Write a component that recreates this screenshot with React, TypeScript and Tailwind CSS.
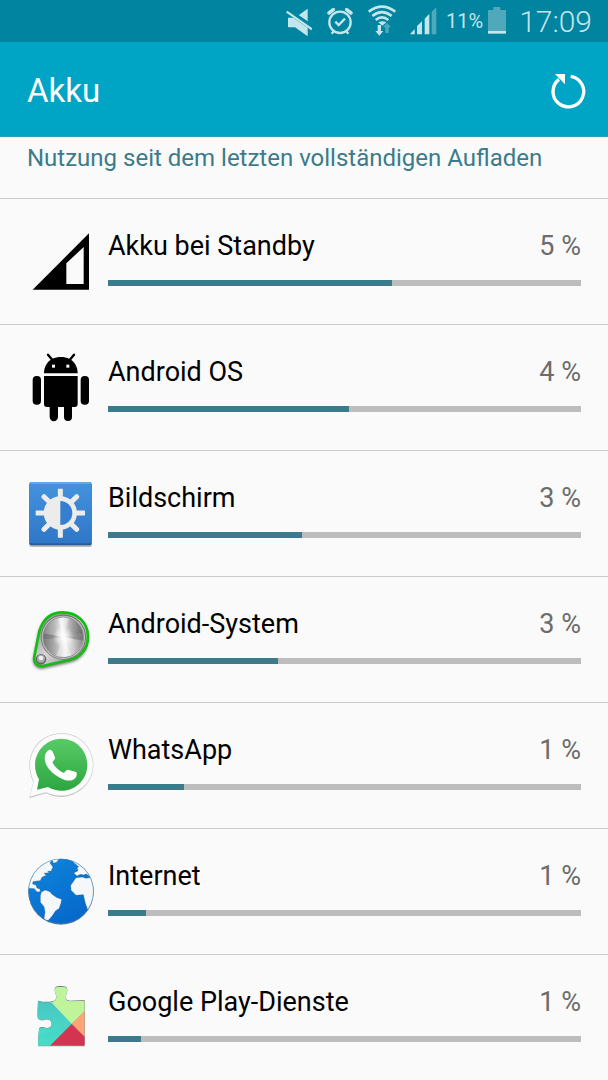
import { ReactNode } from "react";

type BatteryItem = {
	name: string;
	percent: number;
	// Bar length relative to the full track, in percent
	share: number;
	icon: ReactNode;
};

function StandbyIcon() {
	return (
		<svg viewBox="24 18 216 216" className="size-[72px] shrink-0" aria-hidden="true">
			<path d="M219 40V209H50Z" fill="#000" />
			<path d="M203 81V192H151V130Z" fill="#fafafa" />
		</svg>
	);
}

function AndroidIcon() {
	return (
		<svg viewBox="24 36 216 216" className="size-[72px] shrink-0" aria-hidden="true">
			<path d="M84 100C84 80 93 65 109 56C125 49 145 49 160 56C176 65 185 80 185 100Z" />
			<path d="M96 44L109 60M174 44L161 60" stroke="#000" strokeWidth="7" strokeLinecap="round" />
			<path d="M84 108H185V192Q185 201 176 201H168V231A12 12 0 0 1 144 231V201H126V231A12 12 0 0 1 101 231V201H93Q84 201 84 192Z" />
			<rect x="50" y="108" width="25" height="86" rx="12" />
			<rect x="194" y="108" width="25" height="86" rx="12" />
			<rect x="108" y="74" width="9" height="9" fill="#fafafa" />
			<rect x="151" y="74" width="9" height="9" fill="#fafafa" />
		</svg>
	);
}

function DisplayIcon() {
	return (
		<svg viewBox="24 24 216 216" className="size-[72px] shrink-0" aria-hidden="true">
			<defs>
				<linearGradient id="display-bg" x1="0" y1="0" x2="0" y2="1">
					<stop offset="0" stopColor="#4492dc" />
					<stop offset="1" stopColor="#2f77c8" />
				</linearGradient>
			</defs>
			<rect x="40" y="42" width="188" height="189" rx="6" fill="#b9babd" />
			<rect x="40" y="38" width="187" height="188" rx="6" fill="#275c97" />
			<rect x="40" y="36" width="187" height="184" rx="6" fill="url(#display-bg)" />
			<path d="M45 39H222" stroke="#6bb3df" strokeWidth="4" />
			<g stroke="#ececec" strokeWidth="15" strokeLinejoin="round">
				<path d="M133 56V85M133 174V203M59 129H88M178 129H207" />
				<path d="M84 80L101 97M182 80L165 97M84 178L101 161M182 178L165 161" strokeLinecap="round" />
			</g>
			<circle cx="133" cy="129" r="50" fill="#ececec" />
			<path d="M133 93A36 36 0 0 1 133 165Z" fill="#347fcf" />
		</svg>
	);
}

function SystemIcon() {
	return (
		<svg viewBox="24 24 216 216" className="size-[72px] shrink-0" aria-hidden="true">
			<defs>
				<linearGradient id="system-plate" x1="0" y1="0" x2="1" y2="1">
					<stop offset="0" stopColor="#777" />
					<stop offset="0.5" stopColor="#d8d8d8" />
					<stop offset="1" stopColor="#777" />
				</linearGradient>
				<linearGradient id="system-upper" x1="0" y1="0" x2="1" y2="0">
					<stop offset="0" stopColor="#868686" />
					<stop offset="0.3" stopColor="#bcbcbc" />
					<stop offset="0.48" stopColor="#f4f4f4" />
					<stop offset="0.7" stopColor="#aaa" />
					<stop offset="1" stopColor="#666" />
				</linearGradient>
				<linearGradient id="system-lower" x1="0" y1="0" x2="1" y2="0">
					<stop offset="0" stopColor="#777" />
					<stop offset="0.3" stopColor="#b0b0b0" />
					<stop offset="0.55" stopColor="#f2f2f2" />
					<stop offset="0.75" stopColor="#ccc" />
					<stop offset="1" stopColor="#888" />
				</linearGradient>
				<radialGradient id="system-glow">
					<stop offset="0" stopColor="#fff" />
					<stop offset="1" stopColor="#fff" stopOpacity="0" />
				</radialGradient>
				<filter id="system-shadow" x="-20%" y="-20%" width="140%" height="140%">
					<feGaussianBlur stdDeviation="5" />
				</filter>
			</defs>
			<path
				d="M70 106C82 65 106 49 140 49C184 49 216 80 216 122C216 160 190 187 158 192L80 210C63 212 52 198 55 182Z"
				fill="#444"
				stroke="#444"
				strokeWidth="4"
				opacity="0.8"
				filter="url(#system-shadow)"
				transform="translate(-1 6)"
			/>
			<path
				d="M70 106C82 65 106 49 140 49C184 49 216 80 216 122C216 160 190 187 158 192L80 210C63 212 52 198 55 182Z"
				fill="url(#system-plate)"
				stroke="#10c010"
				strokeWidth="8"
			/>
			<circle cx="142" cy="123" r="68" fill="#777" />
			<circle cx="142" cy="124" r="65" fill="#c8c8c8" />
			<path d="M82 131A60 60 0 0 1 201 115Z" fill="url(#system-upper)" />
			<path d="M82 131A60 60 0 0 0 201 115Z" fill="url(#system-lower)" />
			<path d="M82 131L142 123L82 112ZM201 115L142 123L201 134Z" fill="#555" opacity="0.4" />
			<path d="M125 66L142 123L158 66ZM120 181L142 123L166 181Z" fill="#fff" opacity="0.35" />
			<circle cx="142" cy="123" r="32" fill="url(#system-glow)" />
			<circle cx="142" cy="124" r="61" fill="none" stroke="#777" strokeWidth="2" />
			<circle cx="75" cy="190" r="16" fill="#666" />
			<circle cx="75" cy="188" r="12" fill="#aaa" />
			<circle cx="75" cy="186" r="7" fill="#eee" />
		</svg>
	);
}

function WhatsAppIcon() {
	return (
		<svg viewBox="24 24 216 216" className="size-[72px] shrink-0" aria-hidden="true">
			<defs>
				<linearGradient id="wa-bg" x1="0" y1="0" x2="0" y2="1">
					<stop offset="0" stopColor="#58cb66" />
					<stop offset="1" stopColor="#2da641" />
				</linearGradient>
			</defs>
			<path
				d="M40 228L52 180C18 110 62 34 136 34C190 34 232 76 232 130C232 199 155 247 90 214Z"
				fill="#bdbdbd"
			/>
			<path
				d="M41 224L53 178C20 110 64 35 136 35C189 35 231 76 231 129C231 196 155 243 90 211Z"
				fill="#fcfcfc"
				stroke="#dedede"
				strokeWidth="1"
			/>
			<path
				d="M63 203L69 172C36 116 76 50 136 50C180 50 214 85 214 128C214 188 151 226 96 195Z"
				fill="url(#wa-bg)"
			/>
			<path
				d="M99 84C106 82 109 87 112 94L117 106C119 111 112 116 109 121C117 136 128 146 143 153C147 150 151 142 156 143L180 150C185 153 182 166 176 170C166 179 148 177 133 168C112 157 98 144 90 126C82 108 87 90 99 84Z"
				fill="#fff"
			/>
		</svg>
	);
}

function GlobeIcon() {
	return (
		<svg viewBox="24 24 216 216" className="size-[72px] shrink-0" aria-hidden="true">
			<defs>
				<linearGradient id="globe-sea" x1="0" y1="0" x2="0.6" y2="1">
					<stop offset="0" stopColor="#0e87dc" />
					<stop offset="1" stopColor="#0768cb" />
				</linearGradient>
				<clipPath id="globe-clip">
					<circle cx="135" cy="130" r="97" />
				</clipPath>
			</defs>
			<circle cx="135" cy="132" r="98" fill="#68798a" />
			<circle cx="135" cy="130" r="98" fill="url(#globe-sea)" />
			<g clipPath="url(#globe-clip)" stroke="#174c7c" strokeWidth="1">
				<g fill="#f4f8fb">
					<path d="M30 120L30 60L75 28L110 32L102 45L111 57L105 70L95 70L100 74L84 76L91 82L78 88L73 98L64 99L51 101L50 108L60 111L63 120L72 123L73 131L63 132L55 122Z" />
					<path d="M76 132L88 126L102 131L108 139L121 148L137 154L135 166L129 182L119 188L108 205L97 217L83 218L87 192L84 176L73 163L73 143Z" />
					<path d="M105 30H131L122 43L113 46Z" />
					<path d="M177 47L168 38L206 42L232 80L222 86L211 78L202 81L194 79L183 84L173 75L186 68L183 59L188 56Z" />
					<path d="M180 89L199 87L210 91L226 88L240 125L230 175L215 185L208 166L202 140L180 142L165 127L164 112Z" />
				</g>
			</g>
			<circle cx="135" cy="130" r="97" fill="none" stroke="#6b8aa5" strokeWidth="1" />
		</svg>
	);
}

function PlayServicesIcon() {
	return (
		<svg viewBox="24 24 216 216" className="size-[72px] shrink-0" aria-hidden="true">
			<defs>
				<linearGradient id="play-teal" x1="0" y1="0" x2="0" y2="1">
					<stop offset="0" stopColor="#4bb8c0" />
					<stop offset="1" stopColor="#46dfc8" />
				</linearGradient>
				<path
					id="play-piece"
					d="M66 82Q90 88 109 84Q121 81 121 70Q121 62 117 53C114 39 122 38 136 38C151 38 156 43 153 53Q149 64 149 72Q150 82 161 82L206 80V215H66L69 167C70 160 80 160 89 163C99 166 107 161 107 150C107 138 98 133 88 136C77 139 67 137 65 130V112Z"
				/>
				<clipPath id="play-clip">
					<use href="#play-piece" />
				</clipPath>
			</defs>
			<use href="#play-piece" fill="#777" transform="translate(0 -2)" />
			<use href="#play-piece" fill="#999" transform="translate(0 2)" />
			<g clipPath="url(#play-clip)">
				<path d="M60 36H168V220H60Z" fill="url(#play-teal)" />
				<path d="M50 36H212V105L167 150Z" fill="#bff49b" />
				<path d="M60 36H60L167 150L60 190Z" fill="url(#play-teal)" />
				<path d="M167 150L212 105V195Z" fill="#ffa477" />
				<path d="M167 150L212 195V217H100Z" fill="#d3344f" />
			</g>
		</svg>
	);
}

const items: BatteryItem[] = [
	{ name: "Akku bei Standby", percent: 5, share: 60, icon: <StandbyIcon /> },
	{ name: "Android OS", percent: 4, share: 51, icon: <AndroidIcon /> },
	{ name: "Bildschirm", percent: 3, share: 41, icon: <DisplayIcon /> },
	{ name: "Android-System", percent: 3, share: 36, icon: <SystemIcon /> },
	{ name: "WhatsApp", percent: 1, share: 16, icon: <WhatsAppIcon /> },
	{ name: "Internet", percent: 1, share: 8, icon: <GlobeIcon /> },
	{ name: "Google Play-Dienste", percent: 1, share: 7, icon: <PlayServicesIcon /> },
];

function StatusBar() {
	return (
		<div className="flex h-[42px] items-center justify-end bg-[#00849f] pr-4 text-[#c3e5ec]">
			<div className="flex gap-[14px]">
				{/* Muted */}
				<svg viewBox="12 0 84 126" className="h-[42px] w-7" aria-hidden="true">
					<path d="M24 53H45L83 26V109L45 82H24Z" fill="currentColor" />
					<path d="M22 31L98 84" stroke="#00849f" strokeWidth="16" />
					<path d="M20 35L96 88" stroke="currentColor" strokeWidth="7" />
				</svg>
				{/* Alarm */}
				<svg viewBox="138 0 84 126" className="h-[42px] w-7" fill="none" stroke="currentColor" aria-hidden="true">
					<circle cx="180" cy="67" r="32" strokeWidth="7" />
					<path d="M166 65L176 75L195 56" strokeWidth="7" />
					<path d="M147 39L160 29M213 39L200 29" strokeWidth="11" strokeLinecap="round" />
					<path d="M161 94L155 101M199 94L205 101" strokeWidth="7" />
				</svg>
				{/* Wifi with traffic arrows */}
				<svg viewBox="264 0 84 126" className="h-[42px] w-7" fill="none" stroke="currentColor" aria-hidden="true">
					<path d="M266 35Q306 5 346 35" strokeWidth="8" />
					<path d="M277 48Q306 25 335 48" strokeWidth="8" />
					<path d="M287 60Q306 44 325 60" strokeWidth="8" />
					<path d="M295 67Q307 60 319 67L307 77Z" fill="currentColor" stroke="none" />
					<path d="M293 75H303V93H310L298 107L286 93H293Z" fill="currentColor" stroke="none" />
					<path d="M316 99H326V82H333L321 68L309 82H316Z" fill="#4fa9bb" stroke="none" />
				</svg>
				{/* Signal strength */}
				<svg viewBox="390 0 84 126" className="h-[42px] w-7" fill="currentColor" aria-hidden="true">
					<path d="M390 103L404 87V103ZM411 78L426 64V103H411ZM434 56L448 41V103H434Z" />
					<path d="M455 35L469 22V103H455Z" fill="#4fa9bb" />
				</svg>
			</div>
			<span className="ml-2 text-xl">11%</span>
			<svg viewBox="144 0 60 126" className="ml-1 h-[42px] w-5" aria-hidden="true">
				<path d="M147 30H163V21H184V30H201V93H147Z" fill="#4fa9bb" />
				<path d="M147 93H201V101H147Z" fill="#c3e5ec" />
			</svg>
			<time className="ml-3 pt-[2px] text-[30px] leading-10 font-light" dateTime="17:09">
				17:09
			</time>
		</div>
	);
}

function BatteryRow({ name, percent, share, icon }: BatteryItem) {
	return (
		<li className="flex gap-3 border-b border-[#cccccc] pt-[27px] pr-[27px] pb-[26px] pl-6">
			{icon}
			<div className="min-w-0 flex-1">
				<div className="flex items-center justify-between pt-[2px] text-[27px] leading-9">
					<span className="text-black">{name}</span>
					<span className="text-[#6c6c6c]">{percent} %</span>
				</div>
				<div
					className="mt-4 h-[6px] bg-[#bdbdbd]"
					role="progressbar"
					aria-label={name}
					aria-valuenow={share}
					aria-valuemin={0}
					aria-valuemax={100}
				>
					<div className="h-full bg-[#3b7b8b]" style={{ width: `${share}%` }} />
				</div>
			</div>
		</li>
	);
}

export default function App() {
	return (
		<div className="h-screen overflow-hidden bg-[#fafafa] font-['Roboto',sans-serif]">
			<StatusBar />

			<header className="flex h-[95px] items-center justify-between border-b border-[#2f9db4] bg-[#00a5c5] pt-[3px] pr-5 pl-[27px] text-white">
				<h1 className="text-[33px]">Akku</h1>
				<button type="button" aria-label="Aktualisieren" className="cursor-pointer">
					<svg viewBox="54 30 120 126" className="h-[42px] w-10" fill="none" aria-hidden="true">
						<path d="M122 49A46 46 0 1 1 87 58" stroke="#fff" strokeWidth="10" />
						<path d="M75 42H105V73Z" fill="#fff" />
					</svg>
				</button>
			</header>

			<main>
				<h2 className="border-b border-[#cccccc] px-[27px] pt-[5px] pb-6 text-2xl text-[#3b7b8b]">
					Nutzung seit dem letzten vollständigen Aufladen
				</h2>
				<ul>
					{items.map((item) => (
						<BatteryRow key={item.name} {...item} />
					))}
				</ul>
			</main>
		</div>
	);
}
